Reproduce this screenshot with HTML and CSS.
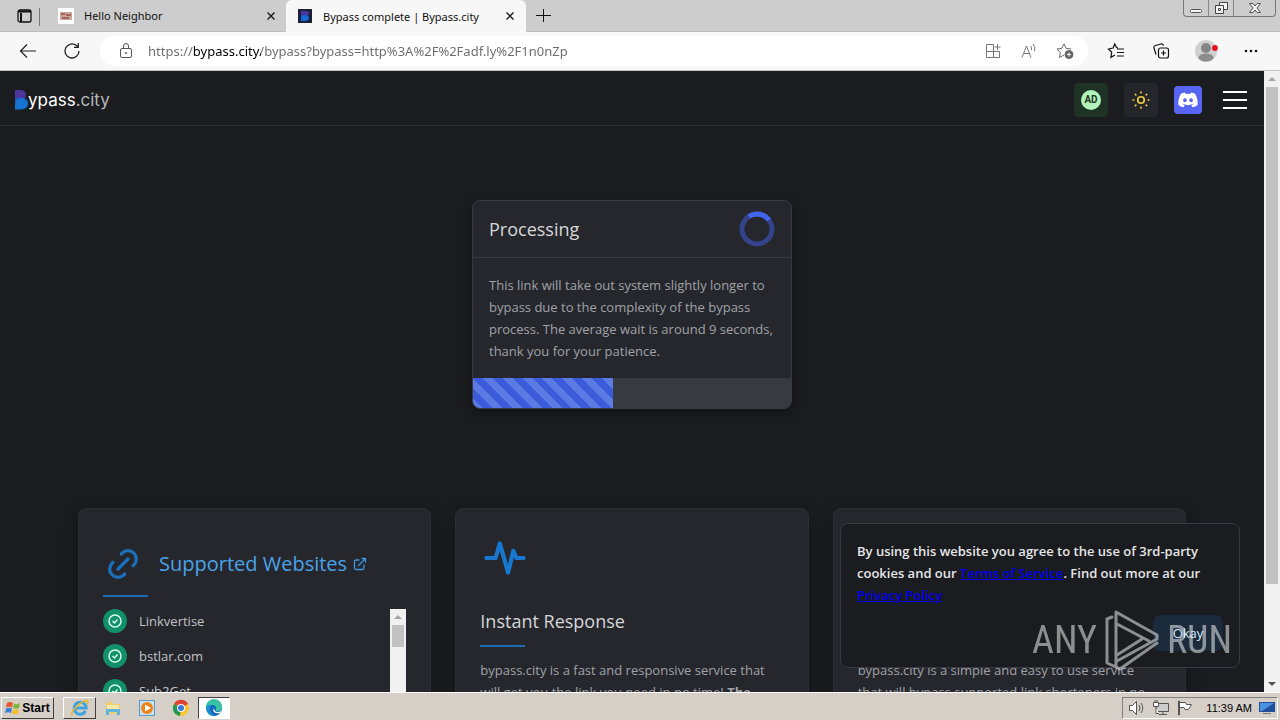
FILE: index.html
```
<!DOCTYPE html>
<html lang="en">
<head>
  <meta charset="UTF-8" />
  <meta name="viewport" content="width=device-width, initial-scale=1.0" />
  <title>Bypass complete | Bypass.city</title>
  <link rel="stylesheet" href="styles.css">
</head>
<body>

  <!-- tab strip -->
  <div class="tabstrip">
    <button class="tab-actions" aria-label="Tab actions menu">
      <svg width="16" height="14" viewBox="0 0 16 14" fill="none" stroke="#111" stroke-width="1.300"><rect x="2" y="1" width="13" height="12" rx="2"/><path d="M2 2.500h13M5 4v9" stroke-width="2"/></svg>
    </button>
    <div class="tab">
      <svg class="favicon" width="16" height="16" viewBox="0 0 16 16"><path fill="#fff" d="M0 0h16v16H0z"/><path fill="#c9a59c" d="M2 4h12v8H2z"/><path fill="#a8655c" d="M3 5h4v2H3zM8 6h5v2H8zM4 9h7v2H4z"/></svg>
      <span class="tab-title">Hello Neighbor</span>
      <button class="tab-close" aria-label="Close tab"><svg width="8" height="8" viewBox="0 0 8 8" stroke="#222" stroke-width="1.500"><path d="M.5.5l7 7M7.500.5l-7 7"/></svg></button>
    </div>
    <div class="tab active">
      <svg class="favicon" width="16" height="16" viewBox="0 0 16 16"><path fill="#1a2036" d="M1 1h14v14H1z"/><path fill="#4a36a0" d="M4 3h5a3 3 0 0 1 3 4l-8 1z"/><path fill="#1668d8" d="M4 13V9q0-2 4-2 4 0 4 3t-4 3z"/></svg>
      <span class="tab-title">Bypass complete | Bypass.city</span>
      <button class="tab-close" aria-label="Close tab"><svg width="8" height="8" viewBox="0 0 8 8" stroke="#222" stroke-width="1.500"><path d="M.5.5l7 7M7.500.5l-7 7"/></svg></button>
    </div>
    <button class="new-tab" aria-label="New tab"><svg width="15" height="13" viewBox="0 0 15 13" stroke="#111"><path d="M7.500 0v13M0 6.500h15"/></svg></button>
    <div class="window-controls">
      <button aria-label="Minimize"><svg width="14" height="12" viewBox="0 0 14 12" fill="#f2f2f2" stroke="#555"><rect x="1.500" y="7.500" width="11" height="3" rx="1"/></svg></button>
      <button aria-label="Restore"><svg width="14" height="12" viewBox="0 0 14 12" fill="#f2f2f2" stroke="#444"><path d="M5.500.5h8v7h-8z"/><path d="M1.500 3.500h8v8h-8z"/><path d="M4.500 6.500h2v2h-2z"/></svg></button>
      <button class="wide" aria-label="Close window"><svg width="12" height="12" viewBox="0 0 12 12" fill="#f2f2f2" stroke="#555"><path d="M.5 1.500h3.500L6 4l2-2.500h3.500L8 6l3.500 4.500H8L6 8l-2 2.500H.5L4 6z"/></svg></button>
    </div>
  </div>

  <!-- address bar -->
  <div class="toolbar">
    <div class="nav-buttons">
      <button class="tool" aria-label="Back"><svg width="18" height="16" viewBox="0 0 18 16" fill="none" stroke="#222" stroke-width="1.200"><path d="M17 8H2M8 1.500L1.500 8 8 14.500"/></svg></button>
      <button class="tool" aria-label="Refresh"><svg width="18" height="18" viewBox="0 0 18 18" fill="none" stroke="#222" stroke-width="1.300"><path d="M16 9a7 7 0 1 1-2.500-5.400L15 5M15.300 1v4.300H11"/></svg></button>
    </div>
    <div class="address">
      <button class="tool small" aria-label="Site information"><svg width="14" height="18" viewBox="0 0 14 18" fill="none" stroke="#555"><rect x="1.500" y="6.500" width="11" height="9" rx="1.500"/><path d="M4.500 6.500V4a2.500 2.500 0 0 1 5 0v2.500"/><circle cx="7" cy="11" r=".6" fill="#666"/></svg></button>
      <input class="url" type="text" aria-label="Address" value="https://bypass.city/bypass?bypass=http%3A%2F%2Fadf.ly%2F1n0nZp">
      <button class="tool small" aria-label="Apps"><svg width="16" height="16" viewBox="0 0 16 16" fill="none" stroke="#777"><path d="M8.500 1.500h-7v13h13V8.500M1.500 8.500h13M8.500 1.500v13M12.500 1v6M9.500 4h6"/></svg></button>
      <button class="tool small" aria-label="Read aloud"><svg width="16" height="16" viewBox="0 0 16 16" fill="none" stroke="#777"><path d="M1 14.500L5.500 3 10 14.500M2.500 10.500h6M9.500 3q1.500 1.500 1 4M12 1q3 3 1.500 7"/></svg></button>
      <button class="tool small" aria-label="Add to favorites"><svg width="18" height="18" viewBox="0 0 18 18" fill="none" stroke="#666"><path d="M8 13l-4.500 2.500.8-5L1 7l4.600-.6L8 2l2.200 4.400L15 7"/><circle cx="13" cy="12.500" r="4" fill="#666"/><path stroke="#fff" d="M13 10.500v4M11 12.500h4"/></svg></button>
    </div>
    <div class="browser-actions">
      <button class="tool" aria-label="Favorites"><svg width="18" height="18" viewBox="0 0 18 18" fill="none" stroke="#111" stroke-width="1.200"><path d="M11 6L9.500 5.500 7.800 2 6 6 1.500 7l3.200 3.300-.8 5L8 13M10 7h7M10 10.500h7M10 14h7"/></svg></button>
      <button class="tool" aria-label="Collections"><svg width="18" height="18" viewBox="0 0 18 18" fill="none" stroke="#111" stroke-width="1.200"><rect x="6.500" y="6" width="10" height="10" rx="2"/><path d="M11.500 8.500v5M9 11h5M4 12.500L2 6q-.5-2 1.500-2.500L9 2q2-.4 2.500 1.500"/></svg></button>
      <button class="tool" aria-label="Profile"><svg width="24" height="24" viewBox="0 0 24 24"><circle cx="12" cy="12" r="11" fill="#d0d0d0"/><circle cx="12" cy="9" r="5" fill="#858585"/><ellipse cx="12" cy="18.500" rx="7.500" ry="4" fill="#8c8c8c"/><circle cx="21" cy="9" r="2.900" fill="#e81123"/></svg></button>
      <button class="tool" aria-label="Settings and more"><svg width="14" height="4" viewBox="0 0 14 4" fill="#111"><circle cx="2" cy="2" r="1.300"/><circle cx="7" cy="2" r="1.300"/><circle cx="12" cy="2" r="1.300"/></svg></button>
    </div>
  </div>

  <!-- web page -->
  <div class="viewport">
    <div class="site">
      <header class="site-header">
        <a class="logo" href="#">
          <svg width="13" height="20" viewBox="0 0 13 20"><path fill="#4c3699" d="M0 0h5q6 0 6 5 0 3-3 4L0 11z"/><path fill="#1673d1" d="M0 19.500V13q1-5 6-5 7 0 7 5.500T6 19.500z"/><path fill="#2752bb" d="M0 8q5-1 7 0-5 0-7 5z"/></svg>
          <span>ypass<span class="logo-tld">.city</span></span>
        </a>
        <nav class="header-buttons">
          <button class="icon-button ad"><span class="ad-dot">AD</span></button>
          <button class="icon-button sun" aria-label="Toggle theme"><svg width="18" height="18" viewBox="0 0 16 16" fill="none" stroke="#f0cb3a" stroke-width="1.500" stroke-linecap="round"><circle cx="8" cy="8" r="2.900"/><path d="M8 1v.5M8 14.500v.5M1 8h.5M14.500 8h.5M3 3l.4.4M12.600 12.600l.4.400M3 13l.4-.4M12.600 3.400l.4-.4"/></svg></button>
          <a class="discord" href="#" aria-label="Discord"><svg width="20" height="16" viewBox="0 0 20 16"><path fill="#fff" d="M7 .5Q4 1 2.800 1.900Q.3 6 .3 12.700Q2.500 14.800 5.500 15.300L6.700 13.400L5 12.500L5.500 12.100Q10 14.200 14.500 12.100L15 12.500L13.300 13.400L14.500 15.300Q17.500 14.800 19.700 12.700Q19.700 6 17.200 1.900Q16 1 13 .5L12.300 1.900Q10 1.600 7.700 1.900z"/><ellipse cx="6.900" cy="8.300" rx="1.800" ry="2" fill="#5865f2"/><ellipse cx="13.100" cy="8.300" rx="1.800" ry="2" fill="#5865f2"/></svg></a>
          <button class="burger" aria-label="Menu"><svg width="24" height="18" viewBox="0 0 24 18" fill="#fff"><path d="M0 0h24v2H0zM0 8h24v2H0zM0 16h24v2H0z"/></svg></button>
        </nav>
      </header>

      <main>
        <section class="process-card">
          <div class="process-head">
            <h1>Processing</h1>
            <svg width="36" height="36" viewBox="0 0 36 36" fill="none" stroke-width="5"><circle cx="18" cy="18" r="15" stroke="#35438a"/><path stroke="#4263eb" d="M10 5.300a15 15 0 0 1 20 3.700"/></svg>
          </div>
          <p>This link will take out system slightly longer to bypass due to the complexity of the bypass process. The average wait is around 9 seconds, thank you for your patience.</p>
          <div class="progress" role="progressbar" aria-valuenow="44" aria-valuemin="0" aria-valuemax="100" aria-label="Bypass progress"><div class="progress-bar" style="width: 44%"></div></div>
        </section>

        <section class="features">
          <article class="feature">
            <div class="feature-title-row">
              <svg width="40" height="40" viewBox="0 0 24 24" fill="none" stroke="#1c6fbb" stroke-width="2" stroke-linecap="round" stroke-linejoin="round"><path d="M9 15l6-6M11 6l.463-.536a5 5 0 0 1 7.071 7.072L18 13M13 18l-.397.534a5.068 5.068 0 0 1-7.127 0 4.972 4.972 0 0 1 0-7.071L6 11"/></svg>
              <a class="supported" href="#">Supported Websites <svg width="14" height="14" viewBox="0 0 14 14" fill="none" stroke="#3e96df" stroke-width="1.300" stroke-linecap="round" stroke-linejoin="round"><path d="M6 3H3Q1.500 3 1.500 4.500V11Q1.500 12.500 3 12.500h6.500Q11 12.500 11 11V8M5.500 8.500l7-7M9 1.500h3.500V5"/></svg></a>
            </div>
            <div class="rule"></div>
            <div class="sites">
              <ul>
                <li><span class="check"><svg width="16" height="16" viewBox="0 0 16 16" fill="none" stroke="#d8fbe9" stroke-width="1.500"><circle cx="8" cy="8" r="6"/><path d="M5.500 8l2 2 3-3.500"/></svg></span>Linkvertise</li>
                <li><span class="check"><svg width="16" height="16" viewBox="0 0 16 16" fill="none" stroke="#d8fbe9" stroke-width="1.500"><circle cx="8" cy="8" r="6"/><path d="M5.500 8l2 2 3-3.500"/></svg></span>bstlar.com</li>
                <li><span class="check"><svg width="16" height="16" viewBox="0 0 16 16" fill="none" stroke="#d8fbe9" stroke-width="1.500"><circle cx="8" cy="8" r="6"/><path d="M5.500 8l2 2 3-3.500"/></svg></span>Sub2Get</li>
              </ul>
              <div class="scrollbar"><span class="arrow up"></span><span class="thumb short"></span></div>
            </div>
          </article>

          <article class="feature">
            <div class="feature-head">
              <svg width="50" height="50" viewBox="0 0 24 24" fill="none" stroke="#1878cf" stroke-width="2" stroke-linecap="round" stroke-linejoin="round"><path d="M3 12h4.500L9.500 5l4 14 2.500-10.500L17.500 12H21"/></svg>
              <h2>Instant Response</h2>
              <div class="rule"></div>
            </div>
            <p>bypass.city is a fast and responsive service that will get you the link you need in no time! <b>The</b></p>
          </article>

          <article class="feature">
            <div class="feature-head"></div>
            <p>bypass.city is a simple and easy to use service that will bypass supported link shorteners in no</p>
          </article>
        </section>
      </main>

      <div class="cookie-notice">
        <p>By using this website you agree to the use of 3rd-party cookies and our <a href="#">Terms of Service</a>. Find out more at our <a href="#">Privacy Policy</a></p>
        <button class="okay">Okay</button>
      </div>

      <div class="watermark">
        <span>ANY</span>
        <svg width="56" height="62" viewBox="0 0 56 62" fill="none" stroke="#fff" stroke-width="3" stroke-linejoin="round" stroke-linecap="round"><path d="M8 8L3 10v44l9 4V3l41 23v4L13 52M13 15l32 17M13 46l25-16M12 58l4 2 37-26"/></svg>
        <span>RUN</span>
      </div>
    </div>

    <div class="scrollbar page-scroll"><span class="arrow up"></span><span class="thumb"></span><span class="arrow down"></span></div>
  </div>

  <!-- taskbar -->
  <div class="taskbar">
    <button class="start"><svg width="16" height="16" viewBox="0 0 16 16"><path fill="#e8562a" d="M2 3q3-2 6 0L7 7.500q-3-1.500-6 0z"/><path fill="#7cb83d" d="M9 3.500q3 1.500 6-.5l-1 5q-3 1.500-6 0z"/><path fill="#3d7fd6" d="M1 8.500q3-1.500 6 0L6 13q-3-1.500-6 0z"/><path fill="#f5bd2b" d="M8 9q3 1.500 6 0l-1 4.500q-3 1.500-6 0z"/></svg>Start</button>
    <button class="task raised" aria-label="Internet Explorer"><svg width="20" height="20" viewBox="0 0 20 20" fill="none"><path stroke="#3fa3dc" stroke-width="3" d="M15.500 13a6 6 0 1 1 .7-3H5"/><path stroke="#e5b62e" stroke-width="1.500" d="M2.500 17.500Q0 15 6 9t11-6.500q2 .5 0 4"/></svg></button>
    <button class="task" aria-label="Explorer"><svg width="18" height="18" viewBox="0 0 18 18"><path fill="#e9cf74" d="M2 3h6l1 2h7v10H2z"/><path fill="#f7e9a6" d="M3 6h12v5H3z"/><path fill="#63b3dd" d="M2 10h14v6h-3v-3H5v3H2z"/></svg></button>
    <button class="task" aria-label="Media Player"><svg width="18" height="18" viewBox="0 0 18 18"><rect x="1.500" y="1.500" width="15" height="15" fill="#c9e2f4" stroke="#5b9bcb"/><circle cx="9" cy="9" r="6" fill="#f08318"/><path fill="#fff" d="M7 5.500l6 3.500-6 3.500z"/></svg></button>
    <button class="task" aria-label="Chrome"><svg width="18" height="18" viewBox="0 0 18 18"><circle cx="9" cy="9" r="8" fill="#f9c72e"/><path fill="#dd4435" d="M9 9L2 5a8 8 0 0 1 14 0z"/><path fill="#26974e" d="M9 9l-1 8A8 8 0 0 1 2 5z"/><circle cx="9" cy="9" r="4" fill="#fff"/><circle cx="9" cy="9" r="3" fill="#3c79dd"/></svg></button>
    <button class="task pressed" aria-label="Edge"><svg width="18" height="18" viewBox="0 0 18 18"><circle cx="9" cy="9" r="8" fill="#1268b8"/><path fill="#39c3a5" d="M1 8a8 8 0 0 1 16 0q1 4-5 4-2 0-1-2 1-4-4-4-4 0-6 2z"/><path fill="#1c91d4" d="M1 8q2-3 6-2-3 2-2 6 1 3 5 5-8 0-9-9z"/><path fill="#fff" d="M10 8q-2 2 0 4t6 0l-1 2q-4 1-6-1t1-5z"/></svg></button>
    <div class="tray">
      <svg width="18" height="16" viewBox="0 0 18 16" fill="none" stroke="#555"><path fill="#fff" d="M1.500 5.500h3l4-4v13l-4-4h-3z"/><path d="M11 5q2 3 0 6M13 3q3.500 5 0 10"/></svg>
      <svg width="18" height="16" viewBox="0 0 18 16" fill="#ccc" stroke="#555"><path d="M4.500 3.500h12v8h-12zM7 14.500h8M11 12v2"/><path fill="#fff" d="M1.500 2.500h5v4h-5zM3 0v2M5 0v2M4 7v6.500h3"/></svg>
      <svg width="18" height="16" viewBox="0 0 18 16" fill="#fff" stroke="#555"><path d="M2.500 1v14h1V1zM3.500 2.500h6l1 2h5l-3 5H9l-1-2H3.500z"/></svg>
      <span class="clock">11:39 AM</span>
      <svg width="16" height="14" viewBox="0 0 16 14"><path fill="#1f4f9c" d="M0 1h16v10H0z"/><path fill="#4a93df" d="M1 2h14L3 10H1z"/><path fill="#777" d="M4 12h8v1H4z"/></svg>
    </div>
  </div>

</body>
</html>
```

FILE: styles.css
```
* {
    box-sizing: border-box;
}
body {
    margin: 0;
    height: 100vh;
    display: flex;
    flex-direction: column;
    overflow: hidden;
    font-family: "Open Sans", "Noto Sans", sans-serif;
    font-size: 13px;
    background: #1a1c1f;
}
button {
    font: inherit;
    padding: 0;
    border: none;
    background: none;
    display: flex;
    align-items: center;
    justify-content: center;
    flex-shrink: 0;
}
svg {
    display: block;
    flex-shrink: 0;
}
h1, h2, p, ul {
    margin: 0;
}

/* tabs */
.tabstrip {
    display: flex;
    height: 32px;
    flex-shrink: 0;
    background: #cdcdcd;
    border-bottom: 1px solid #bdbdbd;
    font-family: "Noto Sans", sans-serif;
    font-size: 11px;
    color: #111;
}
.tab-actions {
    width: 39px;
    padding-left: 8px;
}
.tab {
    display: flex;
    align-items: center;
    width: 247px;
    padding: 0 8px 0 19px;
}
.tab:not(.active) {
    background: linear-gradient(#777, #777) 0 8px / 1px 18px no-repeat;
}
.tab.active {
    width: 240px;
    height: 32px;
    padding: 0 9px 0 11px;
    background: #f7f7f7;
    border-radius: 6px 6px 0 0;
}
.tab-title {
    flex: 1;
    margin-left: 10px;
    white-space: nowrap;
}
.tab-close {
    width: 14px;
    height: 20px;
}
.new-tab {
    width: 34px;
}
.window-controls {
    display: flex;
    height: 17px;
    margin-left: auto;
    margin-right: 4px;
    border: 1px solid #777;
    border-top: none;
    border-radius: 0 0 4px 4px;
}
.window-controls button {
    width: 25px;
    border-right: 1px solid #888;
}
.window-controls .wide {
    width: 41px;
    border: none;
}

/* toolbar */
.toolbar {
    display: flex;
    align-items: center;
    gap: 12px;
    height: 39px;
    flex-shrink: 0;
    padding: 0 13px 0 12px;
    background: #f7f7f7;
    border-bottom: 1px solid #c4c4c4;
}
.nav-buttons {
    display: flex;
    gap: 12px;
}
.browser-actions {
    display: flex;
    gap: 13px;
}
.tool {
    width: 32px;
    height: 28px;
}
.tool.small {
    width: 28px;
}
.address {
    flex: 1;
    display: flex;
    align-items: center;
    gap: 8px;
    height: 30px;
    padding: 0 9px 0 12px;
    background: #fff;
    border-radius: 15px;
}
/* the host part of the address is darker than the rest */
.url {
    flex: 1;
    min-width: 0;
    padding: 0;
    border: none;
    outline: none;
    font: 13px/20px "Noto Sans", sans-serif;
    color: transparent;
    background: linear-gradient(90deg, #6b6b6b 46px, #000 46px, #000 113px, #6b6b6b 113px);
    -webkit-background-clip: text;
    background-clip: text;
}

/* site */
.viewport {
    flex: 1;
    min-height: 0;
    display: flex;
}
.site {
    flex: 1;
    min-width: 0;
    position: relative;
    overflow: hidden;
    background: #1a1c1f;
    color: #c1c2c5;
}
.site-header {
    display: flex;
    align-items: center;
    justify-content: space-between;
    height: 55px;
    padding: 4px 12px 0 15px;
    border-bottom: 1px solid #2c2e33;
}
.logo {
    display: flex;
    align-items: center;
    font-family: Inter, sans-serif;
    font-size: 17px;
    color: #fff;
    text-decoration: none;
}
.logo-tld {
    color: #b5b6b9;
}
.header-buttons {
    display: flex;
    align-items: center;
    gap: 16px;
}
.icon-button,
.burger {
    width: 34px;
    height: 34px;
    border-radius: 4px;
}
.ad {
    background: #1e3325;
}
.ad-dot {
    width: 20px;
    height: 20px;
    border-radius: 50%;
    background: #b2f2bb;
    color: #1b3522;
    font: bold 10px/20px Roboto, sans-serif;
}
.sun {
    background: #25262b;
}
.discord {
    display: flex;
    align-items: center;
    justify-content: center;
    width: 28px;
    height: 28px;
    border-radius: 4px;
    background: #5865f2;
}

.process-card {
    width: 320px;
    margin: 74px auto 99px;
    border: 1px solid #373a40;
    border-radius: 8px;
    background: #25272d;
    box-shadow: 0 4px 12px rgba(0, 0, 0, .3);
    overflow: hidden;
}
.process-head {
    display: flex;
    align-items: center;
    justify-content: space-between;
    height: 57px;
    padding: 0 16px;
    border-bottom: 1px solid #373a40;
}
h1,
h2 {
    font-size: 18px;
    font-weight: 500;
    line-height: 28px;
    color: #d5d6d9;
}
.process-card p,
.feature p {
    line-height: 22px;
    color: #a0a2a7;
}
.process-card p {
    padding: 16px;
}
.progress {
    height: 30px;
    background: #373a40;
}
.progress-bar {
    height: 100%;
    background: repeating-linear-gradient(45deg, #5c7ae3 0 7px, #3b5bdb 7px 14px);
}

.features {
    display: grid;
    grid-template-columns: repeat(3, 1fr);
    gap: 24px;
    margin: 0 78px;
}
.feature {
    height: 320px;
    padding: 24px;
    border: 1px solid #2c2e33;
    border-radius: 8px;
    background: #25272d;
    box-shadow: 0 4px 16px rgba(0, 0, 0, .3);
}
.feature-title-row {
    display: flex;
    align-items: center;
    gap: 16px;
    height: 62px;
}
.supported {
    display: flex;
    align-items: center;
    gap: 6px;
    font-size: 20px;
    font-weight: 500;
    line-height: 28px;
    color: #4aa3e8;
    text-decoration: none;
    white-space: nowrap;
}
.rule {
    width: 45px;
    height: 2px;
    background: #1c6cb5;
}
.sites {
    display: flex;
    justify-content: space-between;
    height: 200px;
    margin-top: 12px;
}
.sites ul {
    display: flex;
    flex-direction: column;
    gap: 11px;
    padding: 0;
    list-style: none;
}
.sites li {
    display: flex;
    align-items: center;
    gap: 12px;
    height: 24px;
    color: #c1c2c5;
}
.check {
    display: flex;
    align-items: center;
    justify-content: center;
    width: 24px;
    height: 24px;
    border-radius: 50%;
    background: #12906a;
}
.feature-head {
    min-height: 114px;
    margin-bottom: 12px;
}
.feature-head h2 {
    margin: 24px 0 10px;
}

.cookie-notice {
    position: absolute;
    right: 24px;
    bottom: 24px;
    width: 400px;
    padding: 16px;
    border: 1px solid #373a40;
    border-radius: 8px;
    background: #1a1c1f;
    font-weight: 600;
    line-height: 22px;
    color: #e6e6e8;
}
.cookie-notice a {
    color: #0000ee;
}
.okay {
    width: 70px;
    height: 36px;
    margin: 9px 0 0 auto;
    border-radius: 8px;
    background: #1c2b3c;
    font-weight: 400;
    color: #d0ebff;
}
.watermark {
    position: absolute;
    right: 32px;
    bottom: 21px;
    display: flex;
    align-items: center;
    gap: 7px;
    font: 38px/62px "Liberation Sans Narrow", "Roboto Condensed", "Liberation Sans", sans-serif;
    color: #fff;
    opacity: .5;
    pointer-events: none;
}

/* scrollbars */
.scrollbar {
    display: flex;
    flex-direction: column;
    align-items: center;
    width: 16px;
    flex-shrink: 0;
    background: #f1f1f1;
}
.arrow {
    width: 16px;
    height: 16px;
    display: flex;
    align-items: center;
    justify-content: center;
}
.arrow::before {
    content: "";
    border: 4px solid transparent;
}
.arrow.up::before {
    border-top: none;
    border-bottom-color: #a3a3a3;
}
.arrow.down::before {
    border-bottom: none;
    border-top-color: #505050;
}
.thumb {
    width: 12px;
    height: 80%;
    background: #c1c1c1;
}
.thumb.short {
    height: 22px;
}
.arrow.down {
    margin-top: auto;
}

/* taskbar */
.taskbar {
    display: flex;
    align-items: center;
    height: 28px;
    flex-shrink: 0;
    padding: 2px 2px 0 1px;
    background: #d5cfc8;
    border-top: 1px solid #fff;
    font: 11px "Liberation Sans", sans-serif;
    color: #000;
}
.start {
    gap: 1px;
    width: 53px;
    height: 22px;
    margin-right: 9px;
    font: bold 12px "Liberation Sans", sans-serif;
}
.start,
.raised {
    border: 1px solid;
    border-color: #fff #404040 #404040 #fff;
}
.task {
    width: 34px;
    height: 22px;
}
.raised {
    width: 33px;
}
.pressed {
    width: 32px;
    border: 1px solid;
    border-color: #404040 #fff #fff #404040;
    background: #fff;
}
.tray {
    display: flex;
    align-items: center;
    gap: 6px;
    height: 22px;
    margin-left: auto;
    padding: 0 2px 0 5px;
    border: 1px solid;
    border-color: #808080 #fff #fff #808080;
}
.clock {
    margin: 0 1px 0 6px;
}
```
